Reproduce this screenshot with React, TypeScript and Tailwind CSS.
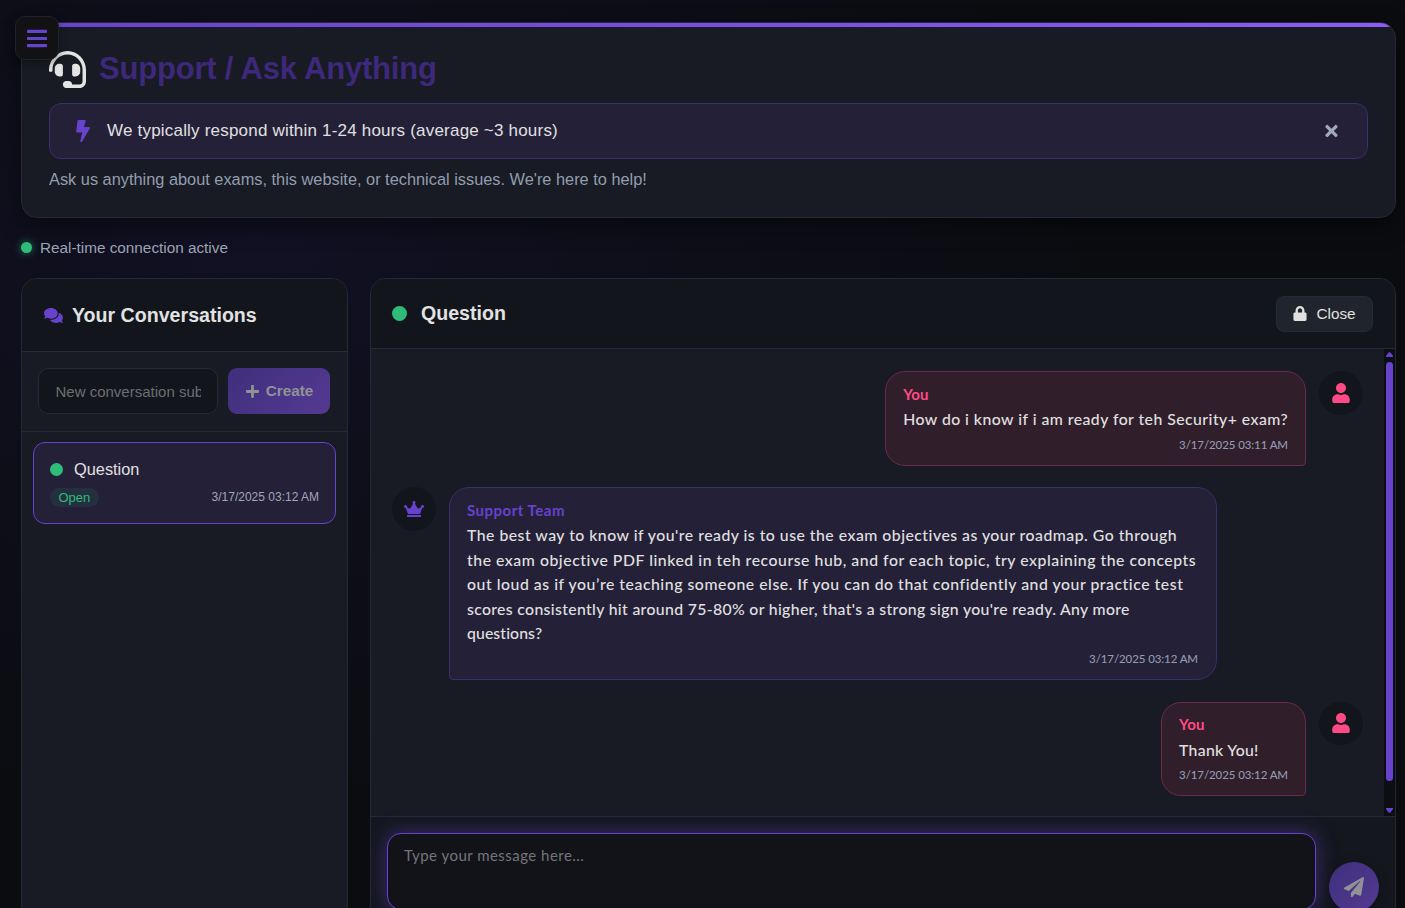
import type { ReactNode } from "react";
import {
  FaBars,
  FaBolt,
  FaComments,
  FaCrown,
  FaHeadset,
  FaLock,
  FaPaperPlane,
  FaPlus,
  FaTimes,
  FaUser,
} from "react-icons/fa";

type Line = { text: string; tracking: string };

type ChatMessage = {
  id: number;
  fromSupport: boolean;
  time: string;
  lines: Line[];
};

const messages: ChatMessage[] = [
  {
    id: 1,
    fromSupport: false,
    time: "3/17/2025 03:11 AM",
    lines: [{ text: "How do i know if i am ready for teh Security+ exam?", tracking: "tracking-[0.46px]" }],
  },
  {
    id: 2,
    fromSupport: true,
    time: "3/17/2025 03:12 AM",
    lines: [
      {
        text: "The best way to know if you're ready is to use the exam objectives as your roadmap. Go through",
        tracking: "tracking-[0.49px]",
      },
      {
        text: "the exam objective PDF linked in teh recourse hub, and for each topic, try explaining the concepts",
        tracking: "tracking-[0.54px]",
      },
      {
        text: "out loud as if you’re teaching someone else. If you can do that confidently and your practice test",
        tracking: "tracking-[0.54px]",
      },
      {
        text: "scores consistently hit around 75-80% or higher, that's a strong sign you're ready. Any more",
        tracking: "tracking-[0.34px]",
      },
      { text: "questions?", tracking: "tracking-[0.1px]" },
    ],
  },
  {
    id: 3,
    fromSupport: false,
    time: "3/17/2025 03:12 AM",
    lines: [{ text: "Thank You!", tracking: "tracking-[0.3px]" }],
  },
];

function Avatar({ children }: { children: ReactNode }) {
  return (
    <div className="flex size-[43.5px] shrink-0 items-center justify-center rounded-full bg-[#12151b]">
      {children}
    </div>
  );
}

function Message({ message }: { message: ChatMessage }) {
  const { fromSupport, lines, time } = message;
  return (
    <div className={fromSupport ? "flex gap-[13px]" : "flex flex-row-reverse gap-[13px]"}>
      <Avatar>
        {fromSupport ? (
          <FaCrown className="h-4 w-5 text-[#6742cd]" />
        ) : (
          <FaUser className="size-5 text-[#ff4a85]" />
        )}
      </Avatar>
      <div
        className={
          fromSupport
            ? "w-[768px] rounded-[20px] rounded-bl-[4px] border border-[#3c2d6e] bg-[#242038] px-[17.5px] pt-[9.5px] pb-[10.5px]"
            : "rounded-[20px] rounded-br-[4px] border border-[#6b2a4b] bg-[#301e2b] px-[17px] pt-[9.5px] pb-[10.5px]"
        }
      >
        <div
          className={
            fromSupport
              ? "mb-px text-[15px] leading-[24.5px] font-bold tracking-[0.5px] text-[#6742cd]"
              : "mb-px text-[15px] leading-[24.5px] font-bold tracking-[0.1px] text-[#ff4a85]"
          }
        >
          {fromSupport ? "Support Team" : "You"}
        </div>
        {lines.map((line) => (
          <p
            key={line.text}
            className={`text-[15.8px] leading-[24.5px] font-medium whitespace-nowrap text-[#e0e0e0] ${line.tracking}`}
          >
            {line.text}
          </p>
        ))}
        <div className="mt-[3px] text-right text-[11.5px] leading-[19.5px] font-medium tracking-[-0.1px] whitespace-nowrap text-[#929bae]">
          {time}
        </div>
      </div>
    </div>
  );
}

function HeaderCard() {
  return (
    <header className="h-[196px] shrink-0 overflow-hidden rounded-2xl border border-[#252836] bg-[#181b23] shadow-[0_8px_24px_rgba(0,0,0,0.45)]">
      <div className="h-1 bg-linear-to-r from-[#6742cd] to-[#8a5cf6]" />
      <div className="px-[27px] pt-[23px]">
        <h1 className="flex h-[38px] items-center gap-[13px] text-[31px] font-bold tracking-[-0.2px] text-[#3d287b]">
          <FaHeadset className="size-[37px] text-[#e4e4e4]" />
          Support / Ask Anything
        </h1>
        <div className="mt-[15px] flex h-14 items-center rounded-xl border border-[#3c2d6e] bg-[#242038] pr-[29px] pl-[26px]">
          <FaBolt className="h-[22px] w-[14px] text-[#6742cd]" />
          <span className="ml-[17px] grow text-[17px] tracking-[0.2px] text-[#e0e0e0]">
            We typically respond within 1-24 hours (average ~3 hours)
          </span>
          <button type="button" className="text-[#a0a8b9]">
            <FaTimes className="h-[18px] w-[13px]" />
          </button>
        </div>
        <p className="mt-[7px] text-[16.35px] leading-[26px] text-[#929db0]">
          Ask us anything about exams, this website, or technical issues. We're here to help!
        </p>
      </div>
    </header>
  );
}

function Sidebar() {
  return (
    <aside className="flex w-[327px] shrink-0 flex-col overflow-hidden rounded-2xl border border-[#252836] bg-[#181b23]">
      <h2 className="flex h-[73px] shrink-0 items-center border-b border-[#262938] bg-[#12151b] pt-px pl-[22px] text-[19.6px] font-bold text-[#e2e2e2]">
        <FaComments className="mr-[9px] h-[17px] w-[19px] text-[#6742cd]" />
        Your Conversations
      </h2>
      <div className="flex h-20 shrink-0 gap-[10px] border-b border-[#262938] px-4 pt-4">
        <input
          className="h-[46px] w-[180px] rounded-[10px] border border-[#252836] bg-[#12151b] px-[16.5px] pt-px text-[15px] text-[#e0e0e0] placeholder:text-[#6d6e72]"
          placeholder="New conversation subject..."
        />
        <button
          type="button"
          className="flex h-[46px] w-[102px] items-center justify-center gap-[7px] rounded-[9px] bg-linear-135 from-[#402f7c] to-[#533a92] pt-px pl-px text-[15.3px] font-bold text-[#929296]"
        >
          <FaPlus className="h-[15px] w-[13px]" />
          Create
        </button>
      </div>
      <div className="p-[11px] pt-[10px]">
        <div className="h-[82px] rounded-xl border border-[#6742cd] bg-[#242038] px-4 pt-[14px]">
          <div className="flex h-6 items-center gap-[11px] text-[16.35px] text-[#e0e0e0]">
            <span className="size-[13px] rounded-full bg-[#2ebd78]" />
            Question
          </div>
          <div className="mt-[7px] flex h-[19px] items-center justify-between">
            <span className="flex h-[19px] items-center rounded-full bg-[#242f3f] px-[8.5px] text-[13px] text-[#2ebd78]">
              Open
            </span>
            <span className="pb-[2px] text-[12px] leading-none text-[#a0a6b8]">3/17/2025 03:12 AM</span>
          </div>
        </div>
      </div>
    </aside>
  );
}

function Scrollbar() {
  return (
    <div className="flex w-[11px] shrink-0 flex-col items-center bg-[#0d0e13] pt-[3px] pb-[3px]">
      <svg viewBox="0 0 7 5" className="h-[5px] w-[7px] fill-[#6742cd]">
        <path d="M0 5V4L2.8 0.3h1.4L7 4v1z" />
      </svg>
      <div className="mt-[5px] h-[419px] w-[7px] rounded-full bg-[#6742cd]" />
      <svg viewBox="0 0 7 5" className="mt-auto h-[5px] w-[7px] fill-[#6742cd]">
        <path d="M0 0v1l2.8 3.7h1.4L7 1V0z" />
      </svg>
    </div>
  );
}

function ChatPanel() {
  return (
    <main className="flex grow flex-col overflow-hidden rounded-2xl border border-[#252836] bg-[#181b23]">
      <div className="flex h-[70px] shrink-0 items-center border-b border-[#262938] bg-[#12151b] pr-[22px] pl-[21px]">
        <span className="size-[15px] rounded-full bg-[#2ebd78]" />
        <h2 className="ml-[14px] grow text-[19.6px] font-bold text-[#e2e2e2]">Question</h2>
        <button
          type="button"
          className="flex h-9 w-[97px] items-center justify-center gap-[9px] rounded-lg border border-[#262938] bg-[#20242c] pt-px text-[15.3px] text-[#e0e0e0]"
        >
          <FaLock className="mb-px h-[15px] w-[14px]" />
          Close
        </button>
      </div>
      <div className="flex h-[467px] shrink-0">
        <div className="flex grow flex-col gap-[21.8px] pt-[22px] pr-[21.5px] pl-[21px] font-[Lato,'Trebuchet_MS',sans-serif]">
          {messages.map((message) => (
            <Message key={message.id} message={message} />
          ))}
        </div>
        <Scrollbar />
      </div>
      <div className="flex h-[120px] shrink-0 gap-[13px] border-t border-[#262938] bg-[#14171e] pt-4 pr-4 pl-4">
        <textarea
          className="h-[77px] grow resize-none rounded-[14px] border border-[#6742cd] bg-[#121318] px-4 pt-[8.5px] font-[Lato,'Trebuchet_MS',sans-serif] text-[15px] leading-[25px] tracking-[0.47px] shadow-[0_0_20px_rgba(103,66,205,0.5)] placeholder:text-[#74757a]"
          placeholder="Type your message here..."
        />
        <button
          type="button"
          className="mt-[29px] flex size-[50px] shrink-0 items-center justify-center rounded-full bg-linear-135 from-[#402f7c] to-[#533a92] text-[#929296] shadow-[0_3px_12px_rgba(0,0,0,0.3)]"
        >
          <FaPaperPlane className="size-5" />
        </button>
      </div>
    </main>
  );
}

export default function App() {
  return (
    <div className="relative flex h-screen w-full flex-col overflow-hidden bg-[#0b0c10] bg-[radial-gradient(ellipse_60%_60%_at_18%_28%,rgba(72,50,190,0.11),transparent_100%)] pt-[22px] pr-[9px] pl-[21px] font-['Liberation_Sans',Arial,sans-serif]">
      <HeaderCard />
      <div className="flex h-[60px] shrink-0 items-center gap-2 text-[15.3px] text-[#9ca3b4]">
        <span className="mb-px size-[11px] rounded-full bg-[#2ebd78] shadow-[0_0_8px_rgba(46,189,120,0.6)]" />
        Real-time connection active
      </div>
      <div className="flex h-[657px] shrink-0 gap-[22px]">
        <Sidebar />
        <ChatPanel />
      </div>
      <button
        type="button"
        className="absolute top-4 left-[15px] flex size-11 items-center justify-center rounded-[10px] border border-[#20222e] bg-[#121214] shadow-[0_3px_10px_rgba(0,0,0,0.35)]"
      >
        <FaBars className="h-[23px] w-5 text-[#6742cd]" />
      </button>
    </div>
  );
}
